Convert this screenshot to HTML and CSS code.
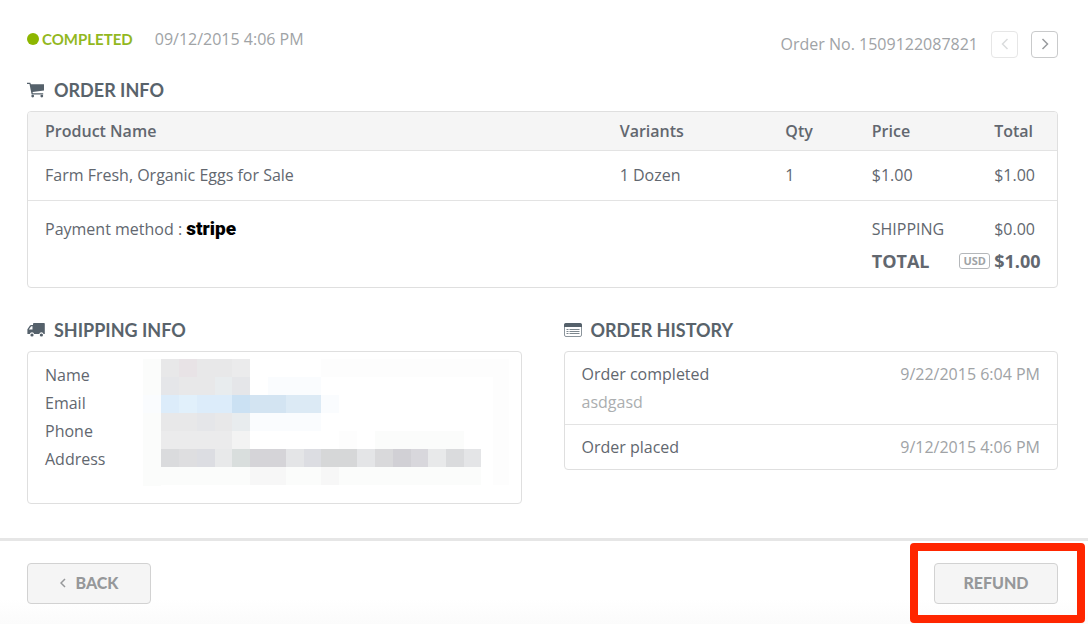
FILE: index.html
```html
<!DOCTYPE html>
<html lang="en">
<head>
<meta charset="utf-8">
<meta name="viewport" content="width=device-width, initial-scale=1">
<title>Order 1509122087821</title>
<link rel="stylesheet" href="styles.css">
</head>
<body>
<main class="page">
  <header class="topbar">
    <div class="status">
      <span class="status-label">COMPLETED</span>
      <time class="muted">09/12/2015 4:06 PM</time>
    </div>
    <nav class="pager" aria-label="Orders">
      <span class="muted">Order No. 1509122087821</span>
      <button class="pager-button" type="button" aria-label="Previous order" disabled>
        <svg width="10" height="14" viewBox="0 0 10 14"><path d="M7.5 2 2.5 7l5 5"/></svg>
      </button>
      <button class="pager-button" type="button" aria-label="Next order">
        <svg width="10" height="14" viewBox="0 0 10 14"><path d="m2.5 2 5 5-5 5"/></svg>
      </button>
    </nav>
  </header>

  <section class="order">
    <h2 class="heading">
      <svg class="icon" width="18" height="16" viewBox="0 0 18 16"><path d="M0 .8h3.3l.6 1.5H17v6.3L5.6 10l.2 1.2h10.4v1.3H4.6L2.5 2.1H0z"/><circle cx="5.7" cy="14.1" r="1.4"/><circle cx="14.8" cy="14.1" r="1.4"/></svg>
      ORDER INFO
    </h2>
    <div class="card">
      <table class="items">
        <colgroup><col class="col-name"><col class="col-variants"><col class="col-qty"><col class="col-price"><col class="col-total"></colgroup>
        <thead>
          <tr><th scope="col">Product Name</th><th scope="col">Variants</th><th scope="col">Qty</th><th scope="col">Price</th><th scope="col">Total</th></tr>
        </thead>
        <tbody>
          <tr><td>Farm Fresh, Organic Eggs for Sale</td><td>1 Dozen</td><td>1</td><td>$1.00</td><td>$1.00</td></tr>
        </tbody>
        <tfoot>
          <tr class="shipping-row"><td colspan="3">Payment method : <b class="stripe">stripe</b></td><td>SHIPPING</td><td>$0.00</td></tr>
          <tr class="total-row"><td colspan="3"></td><td>TOTAL</td><td class="grand"><span class="grand-inner"><span class="currency">USD</span>$1.00</span></td></tr>
        </tfoot>
      </table>
    </div>
  </section>

  <div class="columns">
    <section>
      <h2 class="heading">
        <svg class="icon" width="18" height="16" viewBox="0 0 18 16"><path fill-rule="evenodd" d="M7 1h10q.8 0 .8.8V12h-1.2a2.3 2.3 0 0 0-4.4 0H7.2a2.3 2.3 0 0 0-4.4 0H.4V7.3L3 3.6Q3.4 3 4.2 3H6V1.8Q6 1 7 1M1.8 7.5h3.7V4.3H4.2z"/><circle cx="5" cy="13" r="1.6"/><circle cx="14.4" cy="13" r="1.6"/></svg>
        SHIPPING INFO
      </h2>
      <div class="card shipping">
        <dl class="fields"><dt>Name</dt><dt>Email</dt><dt>Phone</dt><dt>Address</dt></dl>
        <svg class="mosaic" viewBox="0 0 366 127" shape-rendering="crispEdges" aria-hidden="true">
          <path fill="#fdfdfd" d="M178 0h188v18H178zM196 72h18v18h-18zM350 18h16v108h-16z"/>
          <path fill="#fbfcfb" d="M0 0h18v127H0zM18 108h320v18H18zM232 72h89v18h-89z"/>
          <path fill="#fafcfe" d="M107 54h71v18h-71zM125 18h53v18h-53zM0 36h18v18H0zM178 36h18v18h-18z"/>
          <path fill="#e8e8e9" d="M18 0h71v36H18zM36 54h53v18H36zM18 54h18v18H18z"/>
          <path fill="#e8e3e6" d="M36 0h18v18H36z"/>
          <path fill="#e5e6e9" d="M18 18h18v18H18zM89 18h18v18H89zM54 54h18v18H54z"/>
          <path fill="#ebebec" d="M89 0h18v18H89zM18 72h71v18H18z"/>
          <path fill="#e8ecee" d="M72 18h17v18H72zM89 54h18v18H89z"/>
          <path fill="#f3f3f3" d="M89 72h18v18H89z"/>
          <path fill="#dcecfa" d="M18 36h71v18H18z"/>
          <path fill="#e1f0fb" d="M36 36h18v18H36z"/>
          <path fill="#cbe1f3" d="M89 36h18v18H89z"/>
          <path fill="#d3e4f2" d="M107 36h36v18h-36z"/>
          <path fill="#dceaf5" d="M143 36h35v18h-35z"/>
          <path fill="#dadbdd" d="M18 90h18v18H18zM303 90h18v18h-18z"/>
          <path fill="#dedee0" d="M36 90h18v18H36z"/>
          <path fill="#dcdde2" d="M54 90h18v18H54zM161 90h17v18h-17z"/>
          <path fill="#e8e9ea" d="M72 90h17v18H72zM285 90h18v18h-18z"/>
          <path fill="#d9dedd" d="M89 90h18v18H89z"/>
          <path fill="#d5d4d8" d="M107 90h36v18h-36z"/>
          <path fill="#e4e5e7" d="M143 90h18v18h-18zM214 90h18v18h-18zM321 90h17v18h-17z"/>
          <path fill="#d6d7d8" d="M178 90h36v18h-36z"/>
          <path fill="#d9d9db" d="M232 90h18v18h-18z"/>
          <path fill="#d1d0d5" d="M250 90h18v18h-18z"/>
          <path fill="#d8d7dc" d="M268 90h17v18h-17z"/>
          <path fill="#f7f7f7" d="M107 108h36v18h-36zM178 108h18v18h-18z"/>
        </svg>
      </div>
    </section>

    <section>
      <h2 class="heading">
        <svg class="icon" width="18" height="16" viewBox="0 0 18 16"><rect x=".5" y="1.5" width="17" height="13" rx="1.5" fill="#fff" stroke="#8b949b"/><path d="M2 1h14q2 0 2 2v2H0V3q0-2 2-2"/><path stroke="#7d878e" d="M2.5 7.5h2m1 0h10m-13 2h2m1 0h10m-13 2h2m1 0h10"/></svg>
        ORDER HISTORY
      </h2>
      <ul class="card history">
        <li><div>Order completed<p class="note">asdgasd</p></div><time class="muted">9/22/2015 6:04 PM</time></li>
        <li><div>Order placed</div><time class="muted">9/12/2015 4:06 PM</time></li>
      </ul>
    </section>
  </div>
</main>

<footer class="actions">
  <button class="action" type="button">
    <svg width="6" height="10" viewBox="0 0 6 10"><path d="M5 1 1 5l4 4"/></svg>
    BACK
  </button>
  <div class="highlight"><button class="action" type="button">REFUND</button></div>
</footer>
</body>
</html>
```
FILE: styles.css
```css
* {
  box-sizing: border-box;
}

body {
  margin: 0;
  background: #fff;
  color: #62676f;
  font: 16px/28px "Open Sans", "Noto Sans", sans-serif;
}

button {
  font: inherit;
  cursor: pointer;
}

svg {
  flex: none;
}

.page {
  padding: 24px 30px 34px 27px;
}

.muted {
  color: #a0a3a6;
}

.topbar {
  display: flex;
  justify-content: space-between;
  align-items: flex-start;
}

.status {
  display: flex;
  gap: 22px;
  padding-top: 1px;
}

.status-label {
  display: flex;
  align-items: center;
  gap: 3px;
  color: #93b81f;
  font: bold 15px/28px Lato, sans-serif;
}

.status-label::before {
  content: "";
  width: 12px;
  height: 12px;
  border-radius: 50%;
  background: #8db600;
}

.pager {
  display: flex;
  align-items: center;
  gap: 13px;
  padding-top: 6px;
}

.pager-button {
  display: grid;
  place-items: center;
  width: 27px;
  height: 27px;
  padding: 0;
  border: 1px solid #c9cacb;
  border-radius: 4px;
  background: #fff;
}

.pager-button:disabled {
  border-color: #e6e6e6;
}

.pager-button path {
  fill: none;
  stroke: #999c9f;
  stroke-width: 1.5;
}

.pager-button:disabled path {
  stroke: #dadcdd;
}

.heading {
  display: flex;
  align-items: center;
  gap: 9px;
  margin: 0 0 9px;
  color: #59636b;
  font: bold 18px/24px Lato, sans-serif;
}

.icon {
  fill: #55616b;
}

.order {
  padding-top: 20px;
}

.card {
  margin: 0;
  border: 1px solid #dfdfdf;
  border-radius: 4px;
  background: #fff;
  overflow: hidden;
}

.items {
  width: 100%;
  border-collapse: collapse;
  table-layout: fixed;
}

.col-name {
  width: 57.5%;
}

.col-variants {
  width: 16.1%;
}

.col-qty {
  width: 8.4%;
}

.col-price {
  width: 8.5%;
}

.items th,
.items td {
  padding: 0;
  text-align: left;
}

.items th:first-child,
.items td:first-child {
  padding-left: 17px;
}

.items th:last-child,
.items td:last-child {
  padding-left: 35px;
}

.items thead tr {
  height: 38px;
  background: #f5f5f5;
}

.items th {
  font-weight: 600;
}

.items tbody tr {
  height: 50px;
  border-top: 1px solid #e3e3e3;
  border-bottom: 1px solid #e3e3e3;
}

.shipping-row td {
  padding-top: 14px;
}

.total-row {
  font-size: 18px;
  font-weight: bold;
}

.items .total-row td {
  padding-top: 4px;
  padding-bottom: 12px;
}

.items .total-row .grand {
  padding-left: 0;
}

.grand-inner {
  display: flex;
  align-items: center;
  gap: 4px;
}

.currency {
  width: 31px;
  border: 1px solid #b4b7ba;
  border-radius: 3px;
  color: #a0a3a6;
  font-size: 11px;
  line-height: 14px;
  text-align: center;
}

.stripe {
  color: #000;
  font: 900 19px/24px Roboto, sans-serif;
}

.columns {
  display: grid;
  grid-template-columns: 1fr 1fr;
  gap: 42px;
  padding-top: 30px;
}

.shipping {
  display: grid;
  grid-template-columns: 98px 1fr;
  align-items: start;
  padding: 7px 11px 15px 17px;
}

.fields {
  margin: 0;
  padding: 2px 0 15px;
}

.mosaic {
  width: 100%;
}

.history {
  padding: 0;
  list-style: none;
}

.history li {
  display: flex;
  justify-content: space-between;
  padding: 8px 17px;
}

.history li + li {
  border-top: 1px solid #e3e3e3;
}

.note {
  margin: 0;
  color: #abaeb0;
}

.actions {
  display: flex;
  justify-content: space-between;
  align-items: flex-start;
  padding: 22px 30px 20px 27px;
  border-top: 3px solid #e6e6e6;
  background: linear-gradient(#fff 70%, #fbfbfb);
}

.action {
  display: flex;
  align-items: center;
  justify-content: center;
  gap: 10px;
  width: 124px;
  height: 41px;
  border: 1px solid #d2d2d2;
  border-radius: 4px;
  background: #f5f5f5;
  color: #96989a;
  font: 900 16px/24px Lato, sans-serif;
}

.action path {
  fill: none;
  stroke: #96989a;
  stroke-width: 1.5;
}

.highlight {
  position: relative;
}

.highlight::after {
  content: "";
  position: absolute;
  inset: -20px -27px -19px -24px;
  border: 8px solid #ff2600;
  border-radius: 4px;
  pointer-events: none;
}
```
